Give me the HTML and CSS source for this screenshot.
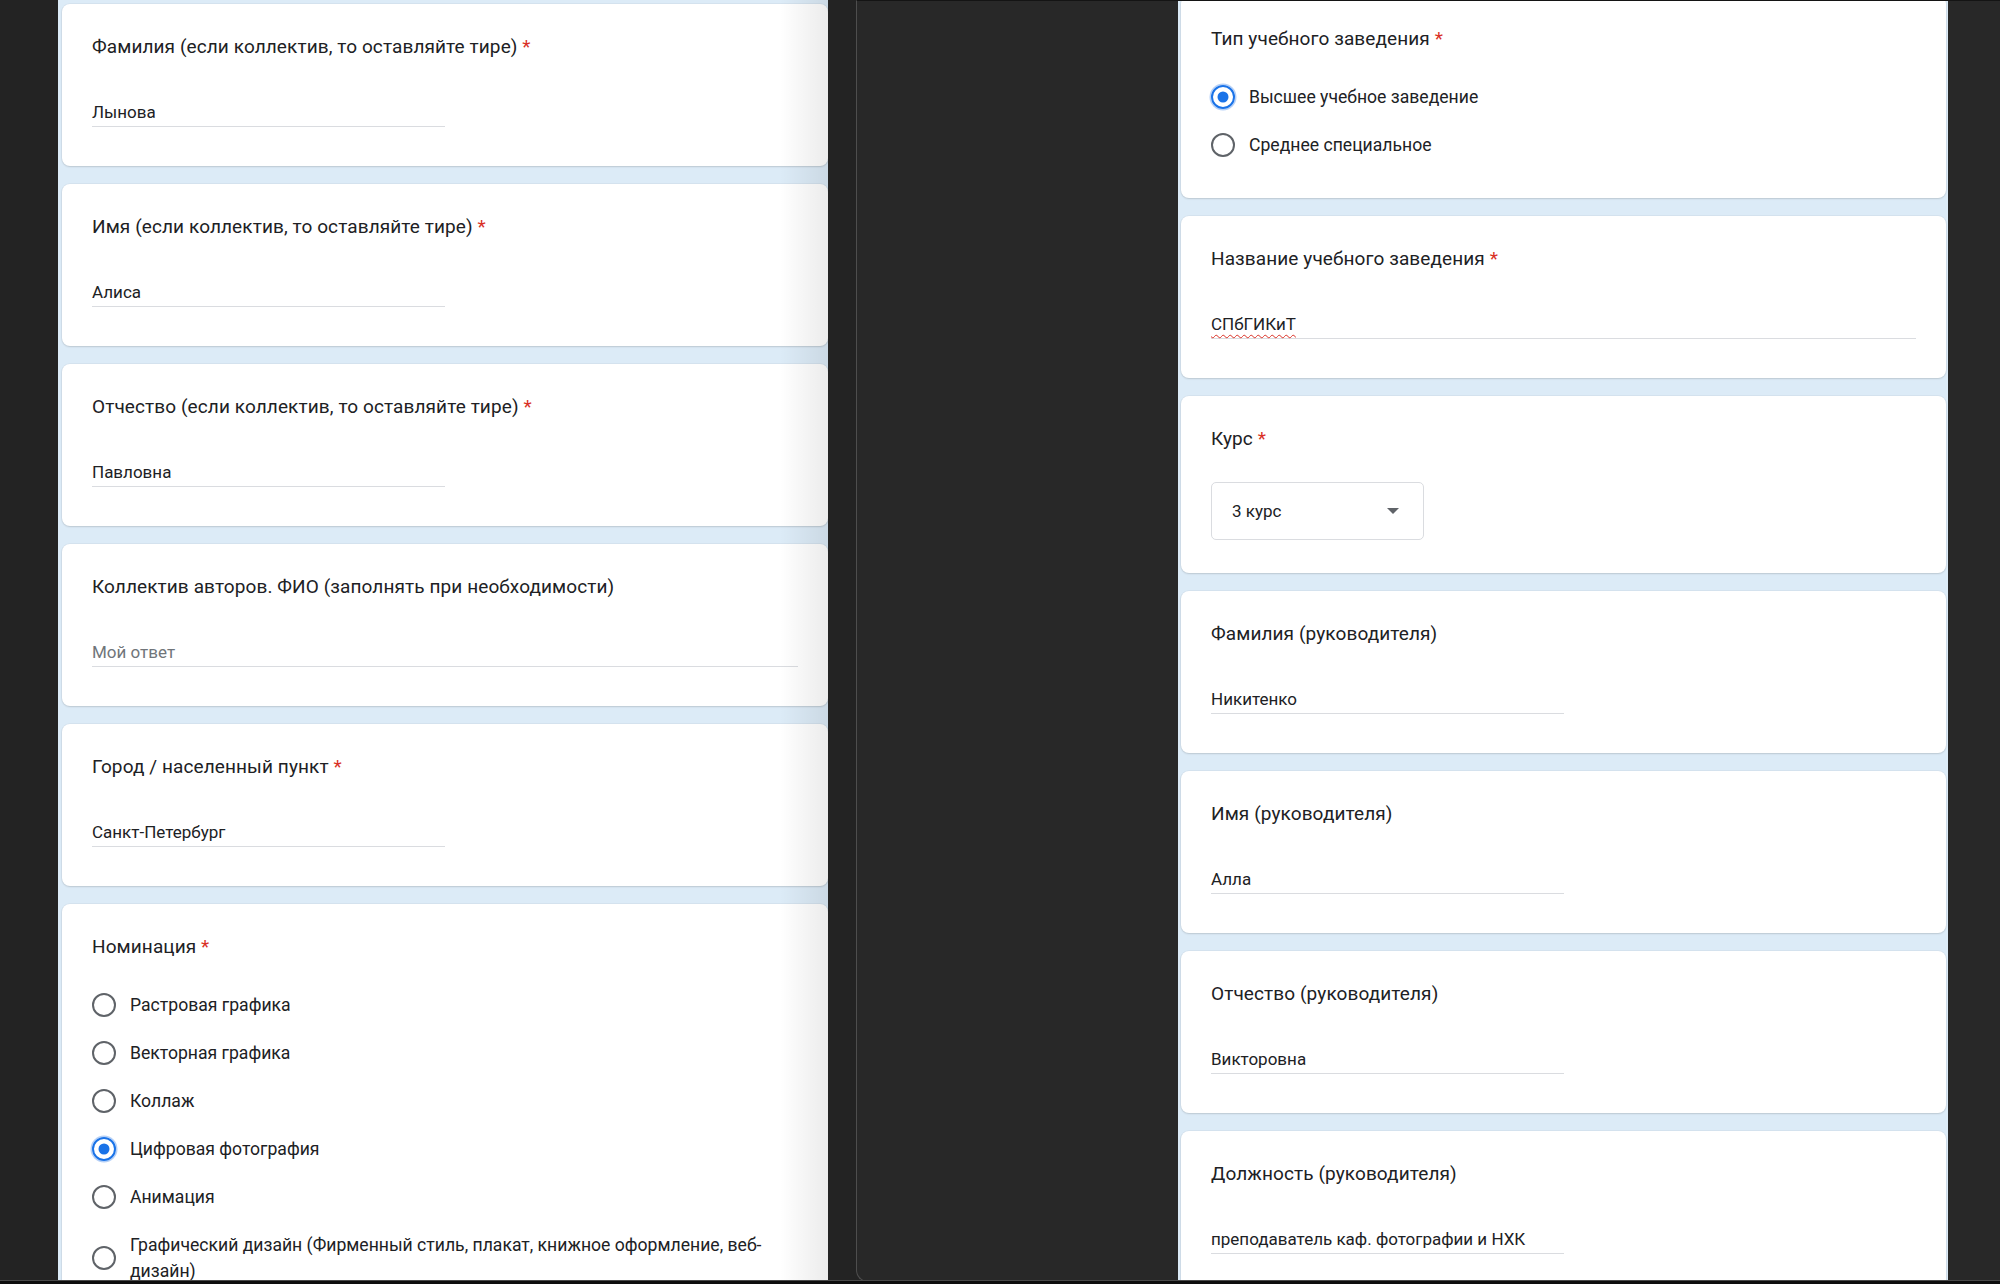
FILE: index.html
```html
<!DOCTYPE html>
<html lang="ru">

<head>
    <meta charset="UTF-8">
    <meta name="viewport" content="width=device-width, initial-scale=1.0">
    <title>Анкета участника</title>
    <link rel="stylesheet" href="styles.css">
</head>

<body>
    <div class="screen">
        <div class="left-pane">
            <div class="form-col">
                <div class="card">
                    <div class="q-title">Фамилия (если коллектив, то оставляйте тире) <span class="req">*</span></div>
                    <div class="answer">Лынова</div>
                </div>
                <div class="card">
                    <div class="q-title">Имя (если коллектив, то оставляйте тире) <span class="req">*</span></div>
                    <div class="answer">Алиса</div>
                </div>
                <div class="card">
                    <div class="q-title">Отчество (если коллектив, то оставляйте тире) <span class="req">*</span></div>
                    <div class="answer">Павловна</div>
                </div>
                <div class="card">
                    <div class="q-title">Коллектив авторов. ФИО (заполнять при необходимости)</div>
                    <div class="answer answer--full placeholder">Мой ответ</div>
                </div>
                <div class="card">
                    <div class="q-title">Город / населенный пункт <span class="req">*</span></div>
                    <div class="answer">Санкт-Петербург</div>
                </div>
                <div class="card card--choice">
                    <div class="q-title">Номинация <span class="req">*</span></div>
                    <div class="options">
                        <div class="option"><span class="radio"></span><span class="option-text">Растровая графика</span></div>
                        <div class="option"><span class="radio"></span><span class="option-text">Векторная графика</span></div>
                        <div class="option"><span class="radio"></span><span class="option-text">Коллаж</span></div>
                        <div class="option"><span class="radio radio--on"></span><span class="option-text">Цифровая фотография</span></div>
                        <div class="option"><span class="radio"></span><span class="option-text">Анимация</span></div>
                        <div class="option"><span class="radio"></span><span class="option-text">Графический дизайн (Фирменный стиль, плакат, книжное оформление, веб-дизайн)</span></div>
                    </div>
                </div>
            </div>
            <div class="edge-fade"></div>
        </div>

        <div class="window">
            <div class="form-col form-col--right">
                <div class="card card--choice">
                    <div class="q-title">Тип учебного заведения <span class="req">*</span></div>
                    <div class="options">
                        <div class="option"><span class="radio radio--on"></span><span class="option-text">Высшее учебное заведение</span></div>
                        <div class="option"><span class="radio"></span><span class="option-text">Среднее специальное</span></div>
                    </div>
                </div>
                <div class="card">
                    <div class="q-title">Название учебного заведения <span class="req">*</span></div>
                    <div class="answer answer--full"><span class="misspelled">СПбГИКиТ</span></div>
                </div>
                <div class="card card--select">
                    <div class="q-title">Курс <span class="req">*</span></div>
                    <div class="select">
                        <span>3 курс</span>
                        <span class="select-arrow"></span>
                    </div>
                </div>
                <div class="card">
                    <div class="q-title">Фамилия (руководителя)</div>
                    <div class="answer">Никитенко</div>
                </div>
                <div class="card">
                    <div class="q-title">Имя (руководителя)</div>
                    <div class="answer">Алла</div>
                </div>
                <div class="card">
                    <div class="q-title">Отчество (руководителя)</div>
                    <div class="answer">Викторовна</div>
                </div>
                <div class="card">
                    <div class="q-title">Должность (руководителя)</div>
                    <div class="answer">преподаватель каф. фотографии и НХК</div>
                </div>
            </div>
        </div>

        <div class="taskbar"></div>
    </div>
</body>

</html>
```

FILE: styles.css
```css
body {
    margin: 0;
    padding: 0;
    background-color: #232323;
    font-family: Roboto, "Noto Sans", Arial, sans-serif;
    color: #202124;
}

.screen {
    display: flex;
    height: 1284px;
    overflow: hidden;
    position: relative;
}

/* левая половина экрана */

.left-pane {
    flex-shrink: 0;
    width: 770px;
    height: 1280px;
    margin-left: 58px;
    position: relative;
    overflow: hidden;
    background-color: #dcebf7;
}

.edge-fade {
    position: absolute;
    top: 0;
    right: 0;
    bottom: 0;
    width: 48px;
    background: linear-gradient(to right, rgba(0, 0, 0, 0), rgba(0, 0, 0, 0.08));
}

.form-col {
    display: flex;
    flex-direction: column;
    gap: 18px;
    padding: 4px 0 0 4px;
}

/* правое окно */

.window {
    flex: 1;
    display: flex;
    height: 1280px;
    margin-left: 28px;
    padding-left: 321px;
    overflow: hidden;
    background-color: #282828;
    border-top: 1px solid #141414;
    border-left: 1px solid #4e4e4e;
    border-bottom: 1px solid #4e4e4e;
    border-bottom-left-radius: 12px;
}

.form-col--right {
    flex-shrink: 0;
    width: 765px;
    margin-top: -5px;
    padding: 0 2px 0 3px;
    background-color: #dcebf7;
}

.form-col--right .card {
    width: 765px;
}

/* карточки вопросов */

.card {
    flex-shrink: 0;
    width: 766px;
    padding: 30px 30px 39px;
    box-sizing: border-box;
    background-color: #fff;
    border-radius: 8px;
    box-shadow: 0 0 0 1px rgba(0, 0, 0, 0.03), 0 1px 2px rgba(0, 0, 0, 0.12);
}

.q-title {
    font-size: 19px;
    line-height: 26px;
    letter-spacing: 0.1px;
}

.req {
    color: #d93025;
}

.answer {
    width: 50%;
    margin-top: 41px;
    padding-bottom: 3px;
    font-size: 17px;
    line-height: 22px;
    border-bottom: 1px solid #dadce0;
}

.answer--full {
    width: 100%;
}

.placeholder {
    color: #70757a;
}

.misspelled {
    text-decoration: underline wavy #d93025;
    text-decoration-thickness: 1px;
    text-underline-offset: 4px;
}

/* радиокнопки */

.card--choice {
    padding-bottom: 29px;
}

.options {
    margin-top: 21px;
}

.option {
    display: flex;
    align-items: center;
    padding: 11px 0;
    font-size: 17.6px;
    line-height: 26px;
}

.option-text {
    max-width: 640px;
}

.radio {
    width: 24px;
    height: 24px;
    margin-right: 14px;
    flex-shrink: 0;
    box-sizing: border-box;
    border: 2.5px solid #5f6368;
    border-radius: 50%;
    position: relative;
}

.radio--on {
    border-color: #1a73e8;
    box-shadow: 0 0 0 1.5px #b5d0f7;
}

.radio--on::after {
    content: '';
    position: absolute;
    top: 50%;
    left: 50%;
    width: 11px;
    height: 11px;
    transform: translate(-50%, -50%);
    background-color: #1a73e8;
    border-radius: 50%;
}

/* выпадающий список */

.card--select {
    padding-bottom: 33px;
}

.select {
    display: flex;
    align-items: center;
    justify-content: space-between;
    width: 213px;
    height: 58px;
    margin-top: 30px;
    padding: 0 24px 0 20px;
    box-sizing: border-box;
    font-size: 17px;
    border: 1px solid #dadce0;
    border-radius: 5px;
}

.select-arrow {
    width: 0;
    height: 0;
    border-left: 6px solid transparent;
    border-right: 6px solid transparent;
    border-top: 6px solid #5f6368;
}

.taskbar {
    position: absolute;
    left: 0;
    right: 0;
    bottom: 0;
    height: 3px;
    background-color: #0e0e0e;
    border-top: 1px solid #4a4a4a;
}
```
